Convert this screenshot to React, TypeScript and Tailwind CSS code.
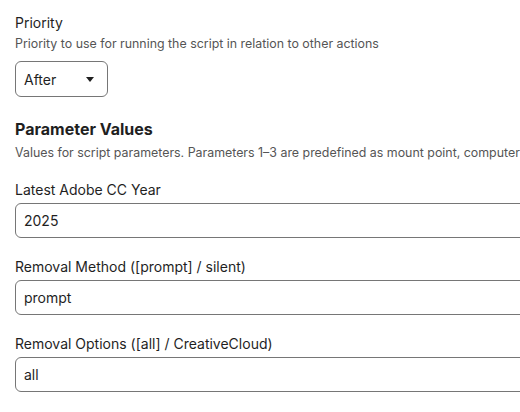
const fields = [
  { label: 'Latest Adobe CC Year', value: '2025' },
  { label: 'Removal Method ([prompt] / silent)', value: 'prompt' },
  { label: 'Removal Options ([all] / CreativeCloud)', value: 'all' },
];

function Field({ label, value }: { label: string; value: string }) {
  return (
    <div className="flex flex-col">
      <label className="text-[14px] leading-5 text-[#1f1f1f]">{label}</label>
      <div className="mt-[3px] flex h-[35px] w-[560px] items-center rounded-[6px] border border-[#767676] px-[8px] text-[14px] text-[#1f1f1f]">
        {value}
      </div>
    </div>
  );
}

export default function App() {
  return (
    <div className="h-[412px] w-[520px] overflow-hidden bg-white pl-[15px] pt-[13px] font-['Inter',sans-serif]">
      <div className="text-[14px] leading-5 text-[#1f1f1f]">Priority</div>
      <div className="mt-[3px] text-[12.4px] leading-4 text-[#555]">
        Priority to use for running the script in relation to other actions
      </div>
      <div className="mt-[9px] flex h-[36px] w-[93px] items-center justify-between rounded-[6px] border border-[#767676] pl-[8px] pr-[13px] text-[14px] text-[#1f1f1f]">
        <span>After</span>
        <svg width="8" height="5" viewBox="0 0 8 5">
          <path d="M0 0h8L4 5z" fill="#1f1f1f" />
        </svg>
      </div>

      <div className="mt-[20px] text-[16px] font-bold leading-6 text-[#1f1f1f]">Parameter Values</div>
      <div className="mt-[4px] whitespace-nowrap text-[12.4px] leading-4 text-[#555]">
        Values for script parameters. Parameters 1–3 are predefined as mount point, computer name, and username
      </div>

      <div className="mt-[19px] flex flex-col gap-[19px]">
        {fields.map((f) => (
          <Field key={f.label} label={f.label} value={f.value} />
        ))}
      </div>
    </div>
  );
}
